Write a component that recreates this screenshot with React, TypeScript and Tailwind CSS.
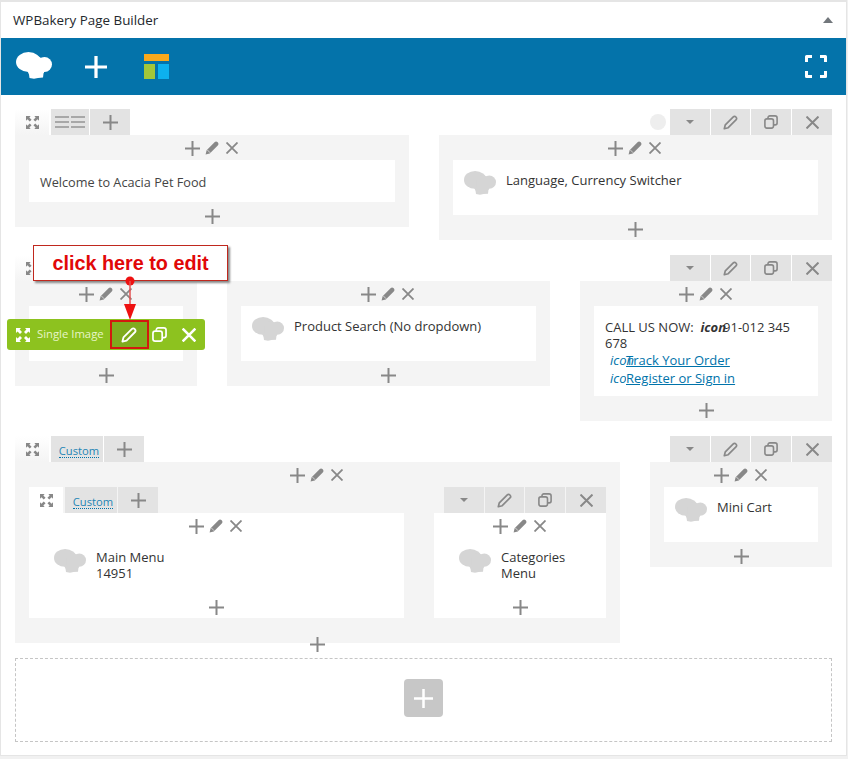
import React from "react";

const Plus = ({ size = 15, stroke = "#888", w = 2 }: { size?: number; stroke?: string; w?: number }) => (
  <svg width={size} height={size} viewBox="0 0 15 15" className="shrink-0">
    <path d="M7.5 0V15M0 7.5H15" stroke={stroke} strokeWidth={w} fill="none" />
  </svg>
);
const Pencil = ({ size = 14, fill = "#888" }: { size?: number; fill?: string }) => (
  <svg width={size} height={size} viewBox="0 0 14 14" className="shrink-0">
    <path d="M0.6 13.4L1.6 9.2L9.8 1C10.5 0.3 11.7 0.3 12.7 1.2C13.6 2.2 13.7 3.4 13 4.2L4.8 12.4Z" fill={fill} />
    <path d="M2.2 8.8L5.2 11.8" stroke="#f4f4f4" strokeWidth="0.7" />
  </svg>
);
const PencilOutline = ({ size = 15, stroke = "#888" }: { size?: number; stroke?: string }) => (
  <svg width={size} height={size} viewBox="0 0 15 15" className="shrink-0" fill="none" stroke={stroke} strokeWidth="1.7" strokeLinejoin="round">
    <path d="M1.3 13.7L2.3 9.8L10.3 1.8C11 1.1 12 1.1 12.9 2C13.8 2.9 13.9 4 13.2 4.7L5.2 12.7Z" />
  </svg>
);
const Cross = ({ size = 12, stroke = "#888", w = 1.8 }: { size?: number; stroke?: string; w?: number }) => (
  <svg width={size} height={size} viewBox="0 0 12 12" className="shrink-0">
    <path d="M0.5 0.5L11.5 11.5M11.5 0.5L0.5 11.5" stroke={stroke} strokeWidth={w} fill="none" />
  </svg>
);
const Expand = ({ fill = "#888", size = 14 }: { fill?: string; size?: number }) => (
  <svg width={size} height={size} viewBox="0 0 14 14" className="shrink-0">
    <path d="M0 0H5L3.6 1.6L6 4L4 6L1.6 3.6L0 5Z M14 0V5L12.4 3.6L10 6L8 4L10.4 1.6L9 0Z M0 14V9L1.6 10.4L4 8L6 10L3.6 12.4L5 14Z M14 14H9L10.4 12.4L8 10L10 8L12.4 10.4L14 9Z" fill={fill} />
  </svg>
);
const Copy = ({ stroke = "#888", size = 14 }: { stroke?: string; size?: number }) => (
  <svg width={size} height={size} viewBox="0 0 14 14" className="shrink-0" fill="none" stroke={stroke} strokeWidth="1.6">
    <rect x="0.9" y="3.9" width="8.6" height="9.2" rx="2" />
    <path d="M4 3.6V2.8C4 1.7 4.7 0.9 5.8 0.9H11C12.2 0.9 13.1 1.7 13.1 2.9V8C13.1 9.1 12.3 9.9 11.2 9.9H9.6" />
  </svg>
);
const Cloud = ({ fill = "#d5d5d5", w = 32, h = 24 }: { fill?: string; w?: number; h?: number }) => (
  <svg width={w} height={h} viewBox="0 0 36 27" className="shrink-0">
    <g fill={fill}>
      <ellipse cx="12.5" cy="10" rx="12.5" ry="10" />
      <ellipse cx="28.5" cy="12.5" rx="7.5" ry="7.5" />
      <ellipse cx="20.5" cy="9" rx="6" ry="4.5" />
      <rect x="14" y="10" width="14" height="11" />
      <path d="M11 18H29L27.5 21.5L27 25.5L22 26L18 26.8L13.5 26L13 22.5Z" />
    </g>
  </svg>
);

const TopTools = () => (
  <div className="h-[25px] flex items-center justify-center pt-px pr-[2px]">
    <Plus />
    <div className="ml-[5px]"><Pencil /></div>
    <div className="ml-[7px]"><Cross /></div>
  </div>
);
const BottomPlus = () => (
  <div className="h-[25px] flex items-center justify-center pt-[3px]">
    <Plus />
  </div>
);

const Tab = ({ w, children }: { w: string; children?: React.ReactNode }) => (
  <div className={`${w} h-[26px] flex items-center justify-center bg-[#e3e3e3]`}>{children}</div>
);

const ControlsRight = () => (
  <div className="flex gap-px h-[26px] items-stretch">
    <Tab w="w-[40px]">
      <div className="w-0 h-0 border-x-[4px] border-x-transparent border-t-[4px] border-t-[#888]" />
    </Tab>
    <Tab w="w-[39px]"><div className="-ml-[1px]"><PencilOutline /></div></Tab>
    <Tab w="w-[40px]"><Copy /></Tab>
    <Tab w="w-[40px]"><Cross size={13} /></Tab>
  </div>
);

const Custom = () => (
  <span className="ml-[4px] mt-[3px] text-[11.2px] leading-[13px] text-[#2385b5] border-b border-dotted border-[#0073aa]">Custom</span>
);

const ControlsLeft = ({ custom, inner }: { custom?: boolean; inner?: boolean }) => (
  <div className="flex gap-[2px] h-[26px]">
    <div className={`w-[34px] h-[26px] flex items-center justify-center pt-px ${inner ? "bg-white" : "bg-linear-to-b from-white to-[#f4f4f4]"}`}>
      <Expand size={13} />
    </div>
    {custom ? (
      <div className="flex gap-px">
        <Tab w="w-[52px]"><Custom /></Tab>
        <Tab w="w-[40px]"><Plus /></Tab>
      </div>
    ) : (
      <div className="flex gap-px">
        <Tab w="w-[38px]">
          <svg width="30" height="12" viewBox="0 0 30 12">
            <path d="M0 1H14M16 1H30M0 6H14M16 6H30M0 11H14M16 11H30" stroke="#a8a8a8" strokeWidth="2" />
          </svg>
        </Tab>
        <Tab w="w-[40px]"><Plus /></Tab>
      </div>
    )}
  </div>
);

const Block = ({ title, sub, h, nested }: { title: string; sub?: string; h: string; nested?: boolean }) => (
  <div className={`${h} bg-white flex items-start gap-[10px] ${nested ? "pt-[12px] pl-[25px]" : "pt-[11px] pl-[11px]"}`}>
    <Cloud />
    <div className={`text-[13px] leading-[16px] text-[#333] ${nested ? "" : "pt-px"}`}>
      {title}
      {sub && <div>{sub}</div>}
    </div>
  </div>
);

const Col = ({ w, children }: { w: string; children: React.ReactNode }) => (
  <div className={`${w} bg-[#f4f4f4] px-[14px]`}>
    <TopTools />
    {children}
    <BottomPlus />
  </div>
);

export default function App() {
  return (
    <div className="w-[848px] h-[759px] bg-[#f1f1f1] overflow-hidden font-['Open_Sans','Noto_Sans',sans-serif]">
      <div className="relative w-[847px] h-[756px] bg-white border-x border-t-2 border-b border-[#e5e5e5]">
        <div className="h-[36px] flex items-center justify-between pl-[12px] pr-[13px]">
          <span className="text-[13.4px] font-normal text-[#23282d]">WPBakery Page Builder</span>
          <div className="w-0 h-0 border-x-[5px] border-x-transparent border-b-[6px] border-b-[#72777c]" />
        </div>

        <div className="h-[57px] bg-[#0473aa] flex items-center pl-[15px] pr-[19px]">
          <div className="mb-[2px]"><Cloud fill="#fff" w={36} h={27} /></div>
          <div className="ml-[33px]"><Plus size={22} stroke="#fff" w={2.2} /></div>
          <svg width="25" height="25" viewBox="0 0 25 25" className="ml-[37px] shrink-0">
            <rect x="0" y="0" width="25" height="7" fill="#f9a91c" />
            <rect x="0" y="10" width="11" height="15" fill="#a4c639" />
            <rect x="14" y="10" width="11" height="15" fill="#0db1ee" />
          </svg>
          <svg width="22" height="23" viewBox="0 0 22 23" className="ml-auto shrink-0" fill="none" stroke="#fff" strokeWidth="3" strokeLinejoin="round">
            <path d="M1.5 7V1.5H7M15 1.5H20.5V7M20.5 16V21.5H15M7 21.5H1.5V16" />
          </svg>
        </div>

        {/* Row 1 */}
        <div className="flex justify-between items-start pt-[14px] px-[14px]">
          <div className="w-[394px]">
            <ControlsLeft />
            <Col w="w-[394px]">
              <div className="h-[42px] bg-white flex items-center pt-[4px] pl-[11px] text-[12.7px] text-[#444]">Welcome to Acacia Pet Food</div>
            </Col>
          </div>
          <div className="w-[393px]">
            <div className="flex justify-end items-center gap-[4px]">
              <div className="w-[16px] h-[16px] rounded-full bg-[#eee]" />
              <ControlsRight />
            </div>
            <Col w="w-[393px]">
              <Block title="Language, Currency Switcher" h="h-[55px]" />
            </Col>
          </div>
        </div>

        {/* Row 2 */}
        <div className="flex justify-between items-start pt-[15px] px-[14px]">
          <div className="w-[182px]">
            <ControlsLeft />
            <Col w="w-[182px]">
              <div className="h-[55px] bg-white" />
            </Col>
          </div>
          <div className="w-[323px] pt-[26px]">
            <Col w="w-[323px]">
              <Block title="Product Search (No dropdown)" h="h-[55px]" />
            </Col>
          </div>
          <div className="w-[252px]">
            <div className="flex justify-end"><ControlsRight /></div>
            <Col w="w-[252px]">
              <div className="h-[90px] bg-white pt-[13px] pl-[11px] pr-[8px] text-[13px] leading-[16px] text-[#333]">
                <div>
                  CALL US NOW:&nbsp; <i className="font-bold -mr-[3px]">icon</i>91-012 345 678
                </div>
                <div className="pl-[5px] text-[#0073aa] leading-[18px]">
                  <div className="flex"><i className="w-[16px] overflow-visible">icon</i><span className="underline">Track Your Order</span></div>
                  <div className="flex"><i className="w-[16px] overflow-hidden">icon</i><span className="underline">Register or Sign in</span></div>
                </div>
              </div>
            </Col>
          </div>
        </div>

        {/* Row 3 */}
        <div className="flex justify-between items-start pt-[15px] px-[14px]">
          <div className="w-[605px]">
            <ControlsLeft custom />
            <div className="bg-[#f4f4f4] px-[14px] h-[181px]">
              <TopTools />
              <div className="flex justify-between">
                <div className="w-[375px]">
                  <ControlsLeft custom inner />
                  <div className="bg-white h-[105px] flex flex-col">
                    <TopTools />
                    <div className="flex-1 -mt-[1px]">
                      <Block title="Main Menu" sub="14951" h="h-[55px]" nested />
                    </div>
                    <BottomPlus />
                  </div>
                </div>
                <div className="w-[172px]">
                  <div className="flex justify-end"><ControlsRight /></div>
                  <div className="bg-white h-[105px] flex flex-col">
                    <TopTools />
                    <div className="flex-1 -mt-[1px]">
                      <Block title="Categories" sub="Menu" h="h-[55px]" nested />
                    </div>
                    <BottomPlus />
                  </div>
                </div>
              </div>
            </div>
            <div className="relative h-0 flex justify-center -top-[6px] z-10"><Plus /></div>
          </div>
          <div className="w-[182px]">
            <div className="flex justify-end"><ControlsRight /></div>
            <Col w="w-[182px]">
              <Block title="Mini Cart" h="h-[55px]" />
            </Col>
          </div>
        </div>

        {/* Add element area */}
        <div className="mx-[14px] mt-[15px] h-[84px] border border-dashed border-[#c5c5c5] flex items-center justify-center">
          <div className="w-[39px] h-[38px] mb-[4px] rounded-[4px] bg-[#c7c7c7] flex items-center justify-center">
            <Plus size={19} stroke="#fff" w={2} />
          </div>
        </div>

        {/* Green element toolbar over the column */}
        <div className="absolute left-[6px] top-[317px] w-[198px] h-[31px] rounded-[3px] bg-[#8dc21f] flex items-center pl-[9px] text-white">
          <Expand fill="#fff" />
          <span className="ml-[7px] text-[11.3px] text-[#e8f5c8]">Single Image</span>
          <div className="ml-[6px] w-[39px] h-[29px] bg-[#7fab1e] border-2 border-[#d3180f] flex items-center justify-center">
            <PencilOutline stroke="#fff" size={16} />
          </div>
          <div className="ml-[3px]"><Copy stroke="#fff" size={15} /></div>
          <div className="ml-[15px]"><Cross size={14} stroke="#fff" w={2.2} /></div>
        </div>

        {/* Callout annotation */}
        <div className="absolute left-[32px] top-[243px] w-[195px] h-[36px] pt-[2px] bg-white border border-[#c0281e] shadow-[2px_2px_2px_#888] flex items-center justify-center font-['Liberation_Sans',sans-serif] font-bold text-[19.8px] text-[#e10808]">
          click here to edit
        </div>
        <svg className="absolute left-[118px] top-[272px]" width="20" height="48" viewBox="0 0 20 48">
          <circle cx="11" cy="7" r="4.5" fill="#ee1111" />
          <path d="M11 7V32" stroke="#e45050" strokeWidth="1.5" />
          <path d="M5 30H17L11 46Z" fill="#ee1111" />
        </svg>
      </div>
    </div>
  );
}
